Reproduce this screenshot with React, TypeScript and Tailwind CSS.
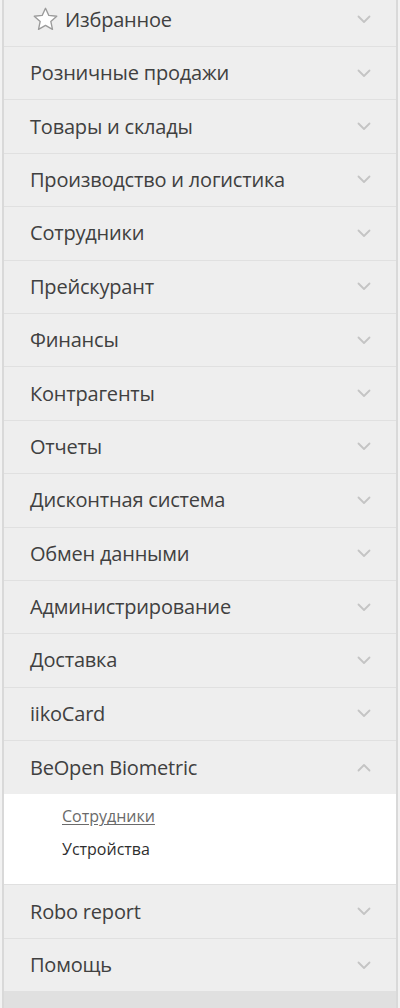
import React from "react";

const items = [
  "Розничные продажи",
  "Товары и склады",
  "Производство и логистика",
  "Сотрудники",
  "Прейскурант",
  "Финансы",
  "Контрагенты",
  "Отчеты",
  "Дисконтная система",
  "Обмен данными",
  "Администрирование",
  "Доставка",
  "iikoCard",
];

function Chevron({ up = false }: { up?: boolean }) {
  return (
    <svg width="14" height="9" viewBox="0 0 14 9" className="shrink-0">
      <path
        d={up ? "M1.5 7.5 L7 2 L12.5 7.5" : "M1.5 1.5 L7 7 L12.5 1.5"}
        fill="none"
        stroke="#c4c4c4"
        strokeWidth="1.8"
        strokeLinecap="round"
        strokeLinejoin="round"
      />
    </svg>
  );
}

function Star() {
  return (
    <svg width="25" height="25" viewBox="0 0 24 24" className="shrink-0">
      <path
        d="M12 1.2 L15.2 8.1 L22.8 8.9 L17.1 13.9 L18.7 21.4 L12 17.6 L5.3 21.4 L6.9 13.9 L1.2 8.9 L8.8 8.1 Z"
        fill="#ffffff"
        stroke="#9a9a9a"
        strokeWidth="1.3"
        strokeLinejoin="round"
      />
    </svg>
  );
}

function Row({ children, up = false }: { children: React.ReactNode; up?: boolean }) {
  return (
    <div className="flex h-[53.4px] items-center justify-between border-b border-[#e0e0e0] pl-[26px] pr-[25px]">
      <div className="flex items-center text-[20px] tracking-[-0.2px] text-[#404040]">{children}</div>
      <Chevron up={up} />
    </div>
  );
}

export default function App() {
  return (
    <div
      className="h-[1008px] w-[400px] overflow-hidden bg-[#f2f2f2]"
      style={{ fontFamily: '"Open Sans", "Noto Sans", sans-serif' }}
    >
      <div className="ml-[2px] mr-[2px] flex h-full flex-col border-x-2 border-[#d9d9d9] bg-[#eeeeee]">
        <div className="-mt-[6.4px]">
          <Row>
            <span className="ml-[3px] mr-[7px] flex">
              <Star />
            </span>
            Избранное
          </Row>
          {items.map((t) => (
            <Row key={t}>{t}</Row>
          ))}
          <div className="flex h-[53.4px] items-center justify-between pl-[26px] pr-[25px]">
            <div className="text-[20px] tracking-[-0.2px] text-[#404040]">BeOpen Biometric</div>
            <Chevron up />
          </div>
          <div className="flex h-[91px] flex-col border-b border-[#e0e0e0] bg-white pl-[58px] pt-[11px] text-[16px]">
            <span className="text-[#6a6a6a] underline underline-offset-2 leading-[22px]">Сотрудники</span>
            <span className="mt-[11px] text-[#2e2e2e] leading-[22px]">Устройства</span>
          </div>
          <Row>Robo report</Row>
          <Row>Помощь</Row>
        </div>
        <div className="flex-1 bg-[#e0e0e0]" />
      </div>
    </div>
  );
}
